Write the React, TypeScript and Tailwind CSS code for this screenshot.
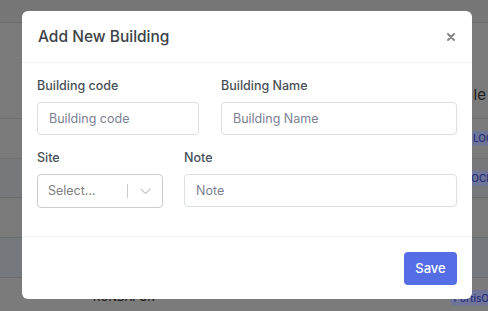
import React from "react";

const font = { fontFamily: "Inter, 'Open Sans', sans-serif" };

function Label({ children }: { children: React.ReactNode }) {
  return <label className="block text-[12.5px] leading-[20px] font-medium text-[#495057] mb-[6px]">{children}</label>;
}

function TextInput({ placeholder }: { placeholder: string }) {
  return (
    <input
      placeholder={placeholder}
      className="block w-full h-[33px] rounded-[4px] border border-[#dcdfe4] bg-white px-[11px] text-[12.5px] text-[#495057] placeholder:text-[#7d8194] outline-none"
    />
  );
}

export default function App() {
  return (
    <div className="relative w-[488px] h-[311px] overflow-hidden bg-[#7a7a7a]" style={font}>
      {/* background page (dimmed) */}
      <div className="flex flex-col">
        <div className="h-[23px] bg-[#777777] border-b border-[#6d6d6d]" />
        <div className="h-[96px] bg-[#7a7a7a] border-b border-[#6d6d6d] flex items-end justify-end pb-[12px]">
          <span className="text-[15px] text-[#1c1c1c] pr-[2px]">le</span>
        </div>
        <div className="h-[40px] bg-[#7c7b7b] border-b border-[#727272] flex items-center pl-[471px]">
          <span className="h-[15px] pl-[2px] pr-[4px] rounded-[3px] bg-[#6f7499] text-[10px] leading-[15px] font-medium text-[#27307a] whitespace-nowrap">LOCATION</span>
        </div>
        <div className="h-[39px] bg-[#76787c] border-b border-[#6d6d6d] flex items-center pl-[464px]">
          <span className="h-[15px] pl-[2px] pr-[4px] rounded-[3px] bg-[#6f7499] text-[10px] leading-[15px] font-medium text-[#27307a] whitespace-nowrap">LOCIN</span>
        </div>
        <div className="h-[40px] bg-[#7a7a7a] border-b border-[#6d6d6d]" />
        <div className="h-[40px] bg-[#75787c] border-b border-[#6d6d6d]" />
        <div className="h-[33px] bg-[#7c7b7b] flex items-start pt-[12px]">
          <span className="ml-[93px] text-[11px] leading-[14px] font-medium text-[#1c1c1c]">KONDAPUR</span>
          <span className="ml-[295px] h-[16px] pl-[4px] pr-[4px] rounded-[6px] bg-[#6f7499] text-[10px] leading-[16px] font-medium text-[#27307a] whitespace-nowrap">PortisOL</span>
        </div>
      </div>

      {/* modal */}
      <div className="absolute left-[22px] top-[11px] w-[450px] h-[288px] bg-white rounded-[6px] flex flex-col">
        <div className="h-[52px] border-b border-[#eff2f7] flex items-center justify-between pl-[16px] pr-[16px]">
          <h5 className="text-[15.5px] font-medium text-[#3d4349] leading-none">Add New Building</h5>
          <button className="w-[10px] h-[10px] flex items-center justify-center">
            <svg width="8" height="8" viewBox="0 0 8 8">
              <path d="M1 1L7 7M7 1L1 7" stroke="#808080" strokeWidth="1.8" strokeLinecap="round" />
            </svg>
          </button>
        </div>
        <div className="flex-1 px-[15px] pt-[13px]">
          <div className="grid grid-cols-[162px_1fr] gap-x-[22px]">
            <div>
              <Label>Building code</Label>
              <TextInput placeholder="Building code" />
            </div>
            <div>
              <Label>Building Name</Label>
              <TextInput placeholder="Building Name" />
            </div>
          </div>
          <div className="grid grid-cols-[126px_1fr] gap-x-[21px] mt-[13px]">
            <div>
              <Label>Site</Label>
              <div className="h-[34px] rounded-[4px] border border-[#cccccc] flex items-center">
                <span className="flex-1 pl-[10px] text-[12.5px] text-[#808080]">Select...</span>
                <span className="w-px h-[14px] bg-[#cccccc]" />
                <span className="w-[34px] flex items-center justify-center">
                  <svg width="11" height="7" viewBox="0 0 11 7">
                    <path d="M1 1.2L5.5 5.5L10 1.2" fill="none" stroke="#cccccc" strokeWidth="1.3" strokeLinecap="round" strokeLinejoin="round" />
                  </svg>
                </span>
              </div>
            </div>
            <div>
              <Label>Note</Label>
              <TextInput placeholder="Note" />
            </div>
          </div>
        </div>
        <div className="h-[63px] border-t border-[#eff2f7] flex items-start justify-end pr-[15px] pt-[15px]">
          <button className="w-[53px] h-[33px] rounded-[4px] bg-[#556ee6] text-white text-[13px] font-medium">Save</button>
        </div>
      </div>
    </div>
  );
}
